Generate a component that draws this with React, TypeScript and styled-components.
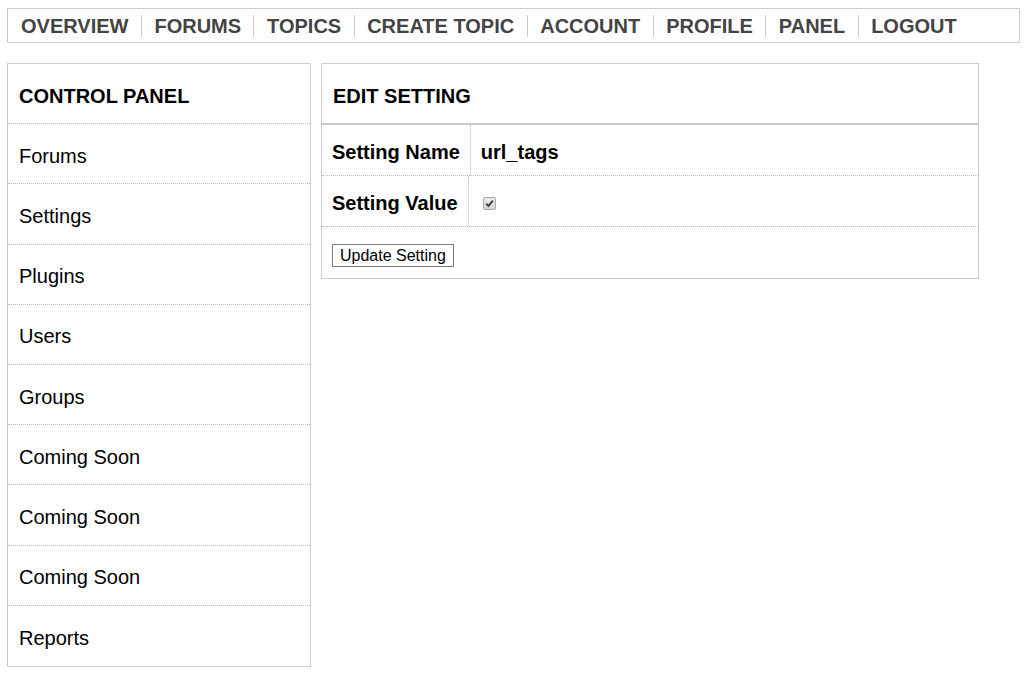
import React from "react";
import styled, { createGlobalStyle } from "styled-components";

const GlobalStyle = createGlobalStyle`
  html, body { background: #fff; }
  body {
    margin: 8px 9px 8px 7px;
    font-family: "Liberation Sans", Arial, sans-serif;
    color: #000;
  }
  * { box-sizing: border-box; }
`;

const Nav = styled.nav`
  display: flex;
  border: 1px solid #ccc;
  padding: 6px 0 5px;
`;

const NavItem = styled.a`
  display: block;
  padding: 0 12.4px 0 12.6px;
  line-height: 22px;
  font-size: 20px;
  font-weight: bold;
  color: #444;
  text-decoration: none;
  white-space: nowrap;
  &:first-child { padding-left: 13px; }
  & + & { border-left: 1px solid #ccc; }
`;

const Content = styled.div`
  display: flex;
  align-items: flex-start;
  gap: 10px;
  margin-top: 20px;
`;

const Sidebar = styled.aside`
  width: 304px;
  border: 1px solid #ccc;
  display: flex;
  flex-direction: column;
`;

const SideRow = styled.div<{ $head?: boolean }>`
  height: 60.2px;
  display: flex;
  align-items: center;
  padding: 5px 10px 0 11px;
  font-size: 20px;
  font-weight: ${(p) => (p.$head ? "bold" : "normal")};
  color: #000;
  &:not(:last-child) { border-bottom: 1px dotted #bbb; }
`;

const Panel = styled.section`
  width: 658px;
  border: 1px solid #ccc;
`;

const PanelHead = styled.div`
  height: 61px;
  display: flex;
  align-items: center;
  padding: 5px 10px 0 11px;
  font-size: 20px;
  font-weight: bold;
  border-bottom: 2px solid #ccc;
`;

const Row = styled.div`
  display: flex;
  height: 51px;
  border-bottom: 1px dotted #bbb;
`;

const Label = styled.div`
  display: flex;
  align-items: center;
  padding: 4px 10px 0;
  font-size: 20px;
  font-weight: bold;
  border-right: 1px dotted #bbb;
`;

const Value = styled.div`
  display: flex;
  align-items: center;
  padding: 4px 10px 0;
  font-size: 20px;
  font-weight: bold;
`;

const Check = styled.span`
  display: inline-flex;
  width: 13px;
  height: 13px;
  margin: 3px 3px 3px 4px;
  border: 1px solid #a8a8a8;
  border-radius: 2px;
  background: linear-gradient(#ececec, #d4d4d4);
  align-items: center;
  justify-content: center;
`;

const ButtonRow = styled.div`
  padding: 17px 10px 11px;
`;

const Button = styled.button`
  height: 23px;
  padding: 0 7px;
  font-family: "Liberation Sans", Arial, sans-serif;
  font-size: 16px;
  color: #000;
  background: #fff;
  border: 1px solid #7a7a7a;
  border-radius: 0;
  display: block;
`;

const navItems = ["OVERVIEW", "FORUMS", "TOPICS", "CREATE TOPIC", "ACCOUNT", "PROFILE", "PANEL", "LOGOUT"];
const sideItems = ["Forums", "Settings", "Plugins", "Users", "Groups", "Coming Soon", "Coming Soon", "Coming Soon", "Reports"];

export default function App() {
  return (
    <>
      <GlobalStyle />
      <Nav>
        {navItems.map((n) => (
          <NavItem key={n} href="#">{n}</NavItem>
        ))}
      </Nav>
      <Content>
        <Sidebar>
          <SideRow $head>CONTROL PANEL</SideRow>
          {sideItems.map((s, i) => (
            <SideRow key={i}>{s}</SideRow>
          ))}
        </Sidebar>
        <Panel>
          <PanelHead>EDIT SETTING</PanelHead>
          <Row>
            <Label>Setting Name</Label>
            <Value>url_tags</Value>
          </Row>
          <Row>
            <Label>Setting Value</Label>
            <Value>
              <Check>
                <svg width="9" height="9" viewBox="0 0 9 9">
                  <path d="M1.2 4.6 L3.4 6.9 L7.9 1.6" fill="none" stroke="#444" strokeWidth="2" />
                </svg>
              </Check>
            </Value>
          </Row>
          <ButtonRow>
            <Button>Update Setting</Button>
          </ButtonRow>
        </Panel>
      </Content>
    </>
  );
}
